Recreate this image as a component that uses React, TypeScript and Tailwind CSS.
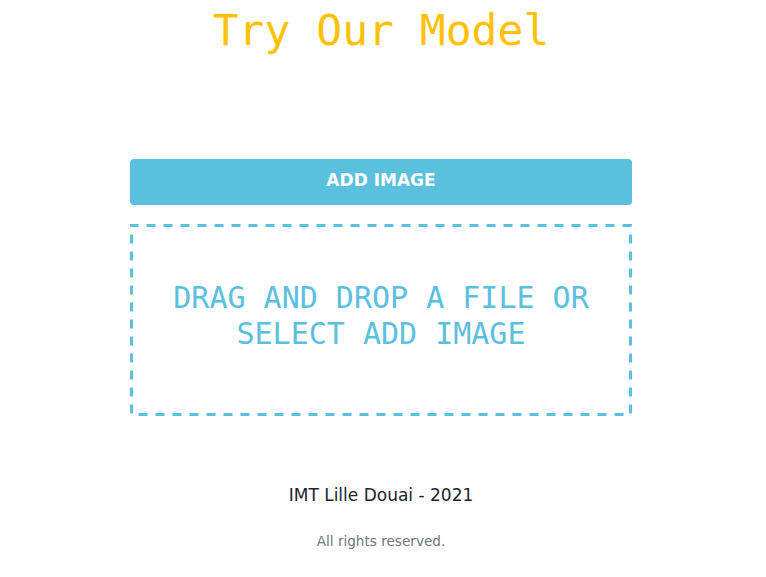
import React from 'react';

const App = () => {
  return (
    <div className="min-h-screen bg-white font-['DejaVu_Sans',sans-serif]">
      <h1 className="pt-[4px] text-center font-['DejaVu_Sans_Mono',monospace] text-[43px] leading-[52px] text-[#ffc107] pr-[4px]">
        Try Our Model
      </h1>

      <div className="ml-[130px] mt-[103px] w-[502px]">
        <button className="h-[46px] w-full rounded-[4px] bg-[#5bc0de] pb-[2px] text-[17px] font-bold text-white">
          ADD IMAGE
        </button>

        {/* Drop zone */}
        <div className="relative mt-[19px] flex h-[192px] items-center justify-center pb-[8px]">
          <svg className="absolute inset-0 h-full w-full" width="502" height="192">
            <rect
              x="1.5"
              y="1.5"
              width="499"
              height="189"
              fill="none"
              stroke="#5bc0de"
              strokeWidth="3"
              strokeDasharray="9 8"
              strokeDashoffset="2"
            />
          </svg>
          <p className="text-center font-['DejaVu_Sans_Mono',monospace] text-[30px] leading-[36px] text-[#5bc0de]">
            DRAG AND DROP A FILE OR
            <br />
            SELECT ADD IMAGE
          </p>
        </div>
      </div>

      {/* Footer */}
      <footer className="mt-[67px] pr-[4px] text-center">
        <p className="text-[17px] leading-[24px] text-[#212529]">IMT Lille Douai - 2021</p>
        <p className="mt-[24px] text-[13.6px] leading-[20px] text-[#6c757d]">All rights reserved.</p>
      </footer>
    </div>
  );
};

export default App;
